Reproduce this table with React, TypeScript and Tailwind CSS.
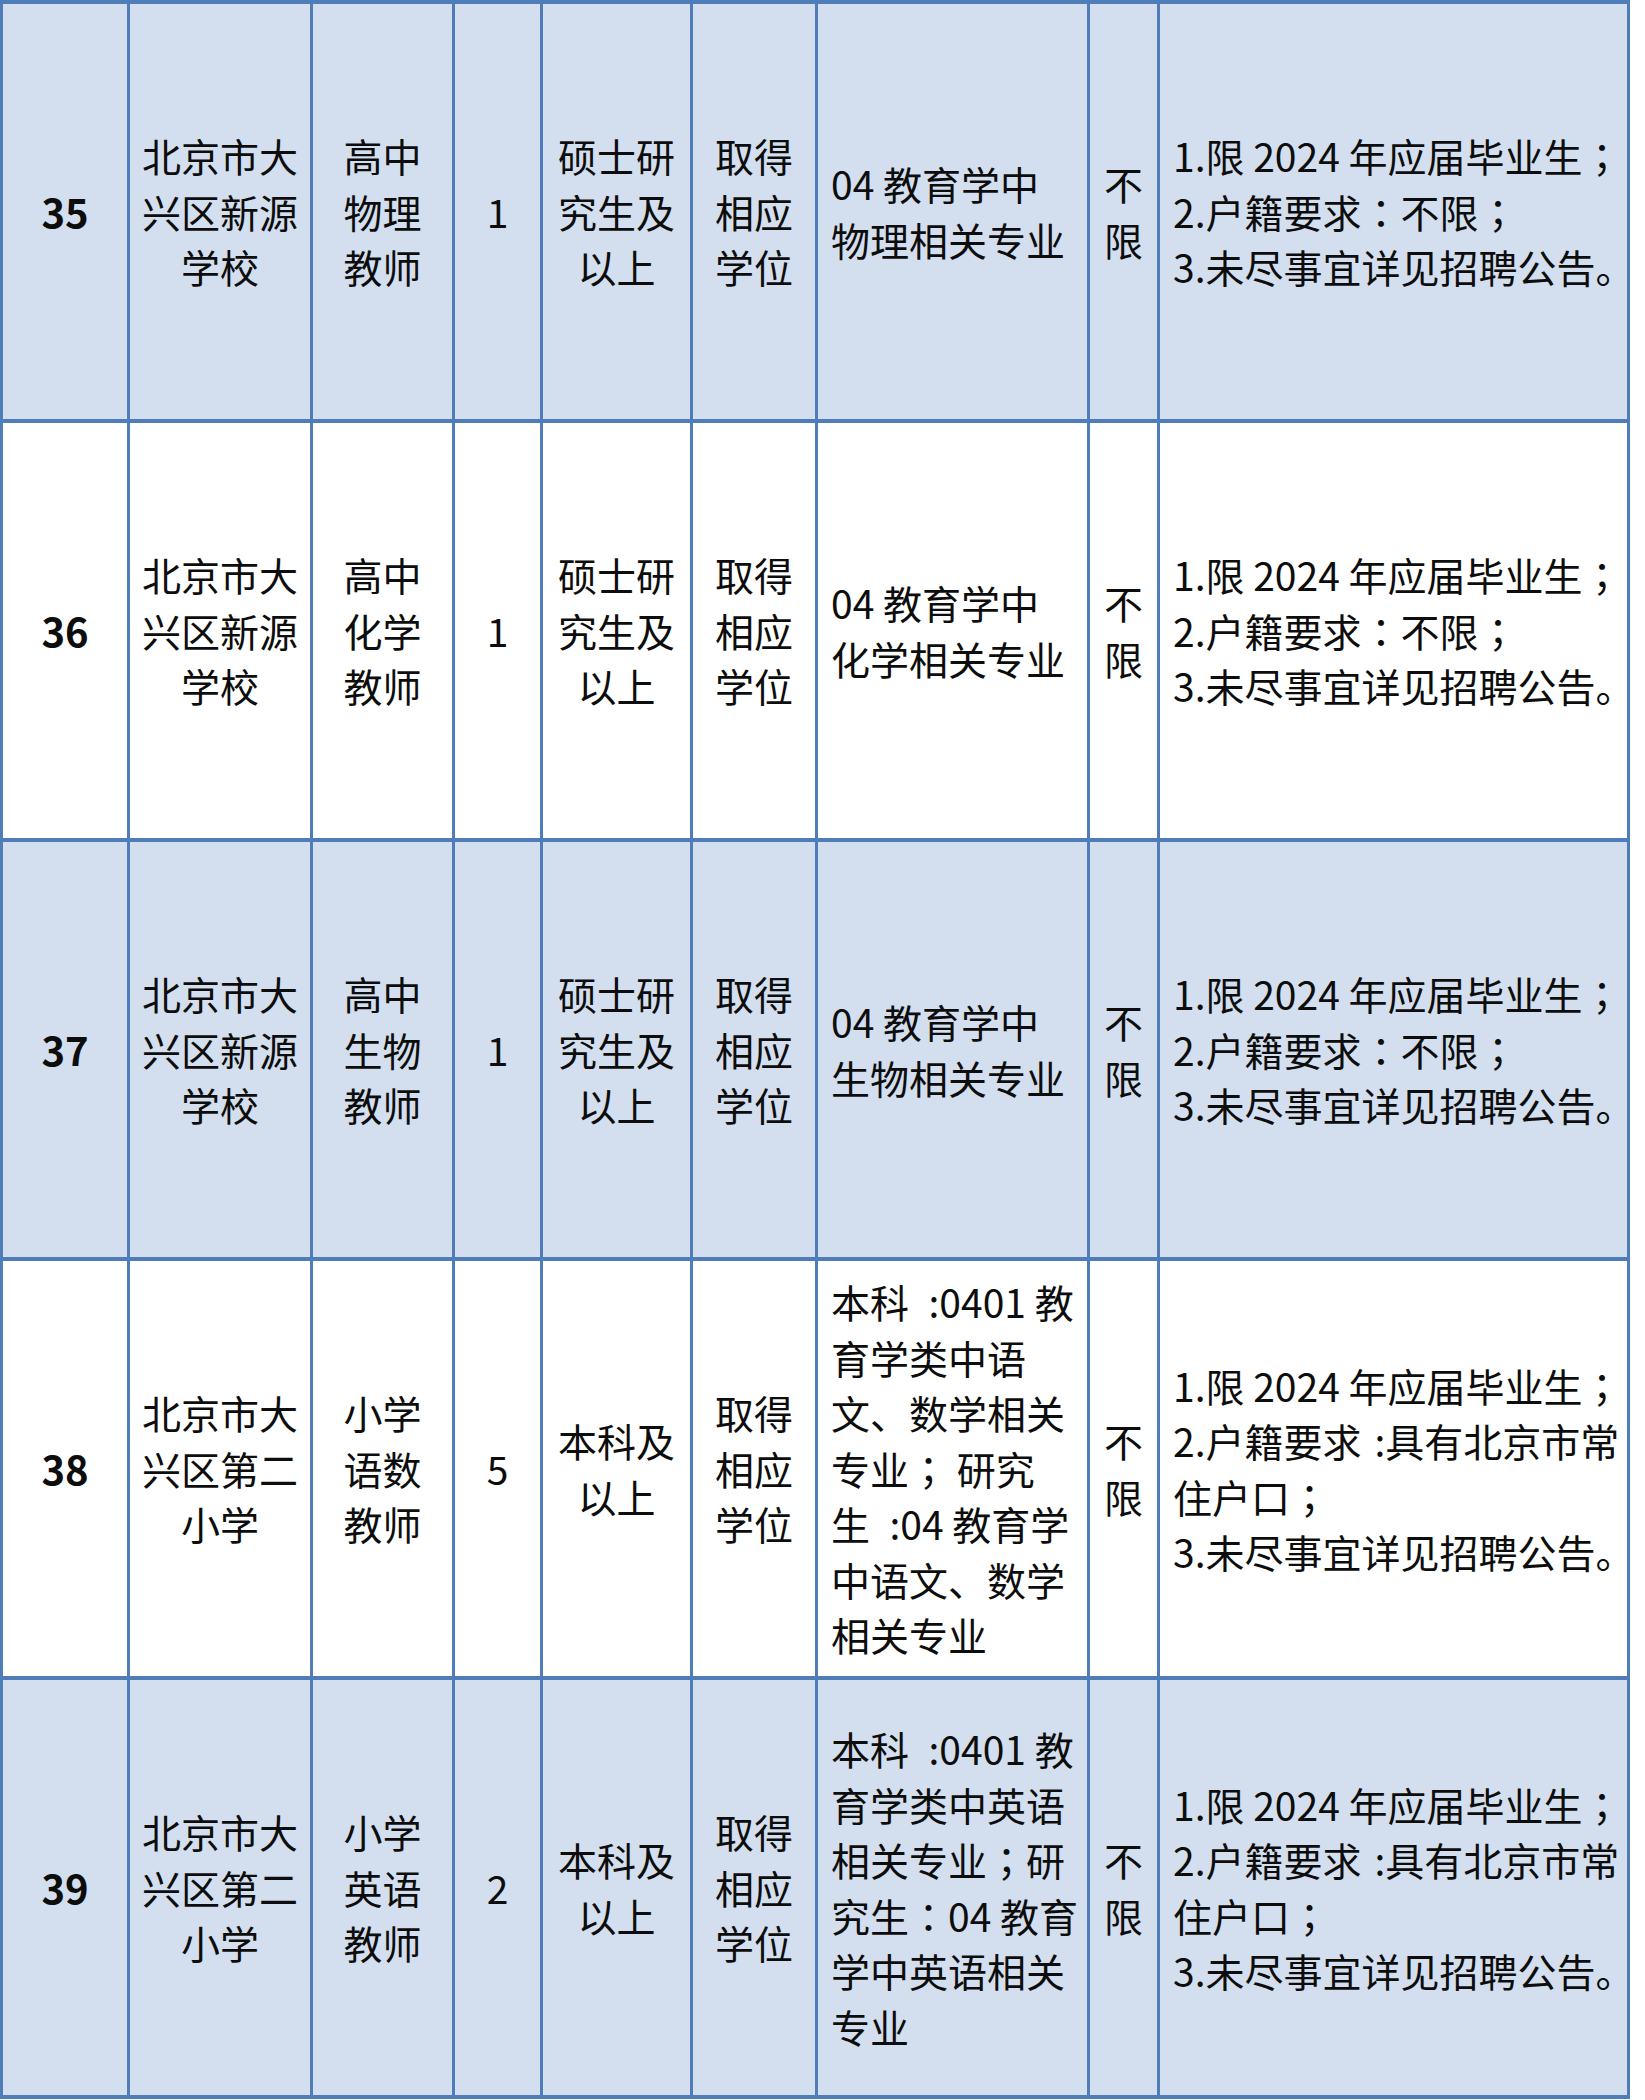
import React from "react";

type Row = {
  no: string;
  school: string[];
  post: string[];
  count: string;
  edu: string[];
  degree: string[];
  major: string[];
  req: string[];
};

const degree = ["取得", "相应", "学位"];

const rows: Row[] = [
  {
    no: "35",
    school: ["北京市大", "兴区新源", "学校"],
    post: ["高中", "物理", "教师"],
    count: "1",
    edu: ["硕士研", "究生及", "以上"],
    degree,
    major: ["04 教育学中", "物理相关专业"],
    req: ["1.限 2024 年应届毕业生；", "2.户籍要求：不限；", "3.未尽事宜详见招聘公告。"],
  },
  {
    no: "36",
    school: ["北京市大", "兴区新源", "学校"],
    post: ["高中", "化学", "教师"],
    count: "1",
    edu: ["硕士研", "究生及", "以上"],
    degree,
    major: ["04 教育学中", "化学相关专业"],
    req: ["1.限 2024 年应届毕业生；", "2.户籍要求：不限；", "3.未尽事宜详见招聘公告。"],
  },
  {
    no: "37",
    school: ["北京市大", "兴区新源", "学校"],
    post: ["高中", "生物", "教师"],
    count: "1",
    edu: ["硕士研", "究生及", "以上"],
    degree,
    major: ["04 教育学中", "生物相关专业"],
    req: ["1.限 2024 年应届毕业生；", "2.户籍要求：不限；", "3.未尽事宜详见招聘公告。"],
  },
  {
    no: "38",
    school: ["北京市大", "兴区第二", "小学"],
    post: ["小学", "语数", "教师"],
    count: "5",
    edu: ["本科及", "以上"],
    degree,
    major: [
      "本科\u2002:0401 教",
      "育学类中语",
      "文、数学相关",
      "专业； 研究",
      "生\u2002:04 教育学",
      "中语文、数学",
      "相关专业",
    ],
    req: [
      "1.限 2024 年应届毕业生；",
      "2.户籍要求\u2004:具有北京市常",
      "住户口；",
      "3.未尽事宜详见招聘公告。",
    ],
  },
  {
    no: "39",
    school: ["北京市大", "兴区第二", "小学"],
    post: ["小学", "英语", "教师"],
    count: "2",
    edu: ["本科及", "以上"],
    degree,
    major: [
      "本科\u2002:0401 教",
      "育学类中英语",
      "相关专业；研",
      "究生：04 教育",
      "学中英语相关",
      "专业",
    ],
    req: [
      "1.限 2024 年应届毕业生；",
      "2.户籍要求\u2004:具有北京市常",
      "住户口；",
      "3.未尽事宜详见招聘公告。",
    ],
  },
];

const cell = "border-x-[3px] border-y-[4px] border-[#4f7dba] align-middle p-0";

// full-width ； and ： sit centred in the original, like the TC glyphs do
function Text({ s }: { s: string }) {
  const parts = s.split(/([；：])/);
  return (
    <>
      {parts.map((p, i) =>
        p === "；" || p === "：" ? (
          <span key={i} style={{ fontFamily: '"Noto Sans CJK TC", sans-serif' }}>
            {p}
          </span>
        ) : (
          <React.Fragment key={i}>{p}</React.Fragment>
        )
      )}
    </>
  );
}

function Lines({ lines }: { lines: string[] }) {
  return (
    <>
      {lines.map((l) => (
        <div key={l} className="whitespace-nowrap">
          <Text s={l} />
        </div>
      ))}
    </>
  );
}

export default function App() {
  return (
    <div
      className="w-[1645px] h-[2100px] bg-white text-[#0d0d0d] text-[39px] leading-[55.5px]"
      style={{ fontFamily: '"Noto Sans CJK SC", "Noto Sans", sans-serif' }}
    >
      <table className="table-fixed border-collapse w-[1627px]">
        <colgroup>
          <col className="w-[127px]" />
          <col className="w-[183px]" />
          <col className="w-[142px]" />
          <col className="w-[88px]" />
          <col className="w-[150px]" />
          <col className="w-[125px]" />
          <col className="w-[272px]" />
          <col className="w-[70px]" />
          <col className="w-[470px]" />
        </colgroup>
        <tbody>
          {rows.map((r, i) => (
            <tr key={r.no} className={`h-[419px] ${i % 2 === 0 ? "bg-[#d3dfee]" : "bg-white"}`}>
              <td className={`${cell} text-center font-bold text-[40px]`}>{r.no}</td>
              <td className={`${cell} text-center`}>
                <Lines lines={r.school} />
              </td>
              <td className={`${cell} text-center`}>
                <Lines lines={r.post} />
              </td>
              <td className={`${cell} text-center`}>{r.count}</td>
              <td className={`${cell} text-center`}>
                <Lines lines={r.edu} />
              </td>
              <td className={`${cell} text-center`}>
                <Lines lines={r.degree} />
              </td>
              <td className={`${cell} pl-[13px]`}>
                <Lines lines={r.major} />
              </td>
              <td className={`${cell} text-center`}>
                <Lines lines={["不", "限"]} />
              </td>
              <td className={`${cell} pl-[13px]`}>
                <Lines lines={r.req} />
              </td>
            </tr>
          ))}
        </tbody>
      </table>
    </div>
  );
}
